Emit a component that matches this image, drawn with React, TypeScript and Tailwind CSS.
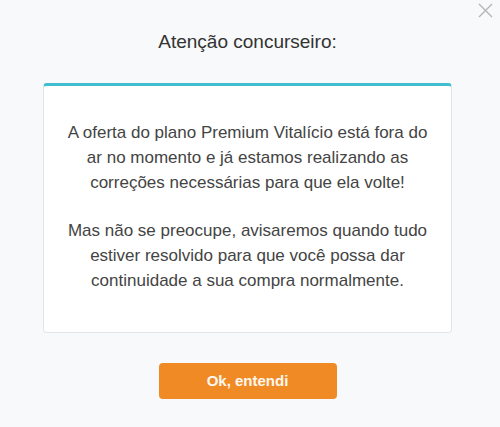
export default function App() {
  return (
    <div
      className="relative w-[500px] h-[427px] bg-[#f8f9fa] flex flex-col items-center pr-[5px] text-[#444]"
      style={{ fontFamily: '"Liberation Sans", Arial, sans-serif' }}
    >
      <button className="absolute right-[7px] top-[3px] w-[15px] h-[15px] text-[#b5b5b5]" aria-label="Fechar">
        <svg viewBox="0 0 15 15" className="w-[15px] h-[15px]" fill="none" stroke="currentColor" strokeWidth="1.4">
          <path d="M1 1L14 14M14 1L1 14" />
        </svg>
      </button>
      <h2 className="mt-[30px] text-[19px] leading-[24px] text-[#333]">Atenção concurseiro:</h2>
      <div className="mt-[29px] w-[409px] bg-white border border-[#e2e4e6] border-t-[3px] border-t-[#3fbfcf] rounded-[4px] pt-[35px] pb-[38px] text-center text-[17px] leading-[24.8px] text-[#444]">
        <p>
          A oferta do plano Premium Vitalício está fora do
          <br />
          ar no momento e já estamos realizando as
          <br />
          correções necessárias para que ela volte!
        </p>
        <p className="mt-[24px]">
          Mas não se preocupe, avisaremos quando tudo
          <br />
          estiver resolvido para que você possa dar
          <br />
          continuidade a sua compra normalmente.
        </p>
      </div>
      <button className="mt-[30px] w-[178px] h-[36px] rounded-[4px] bg-[#f08a25] text-[#fff8ee] font-bold text-[15px]">
        Ok, entendi
      </button>
    </div>
  );
}
